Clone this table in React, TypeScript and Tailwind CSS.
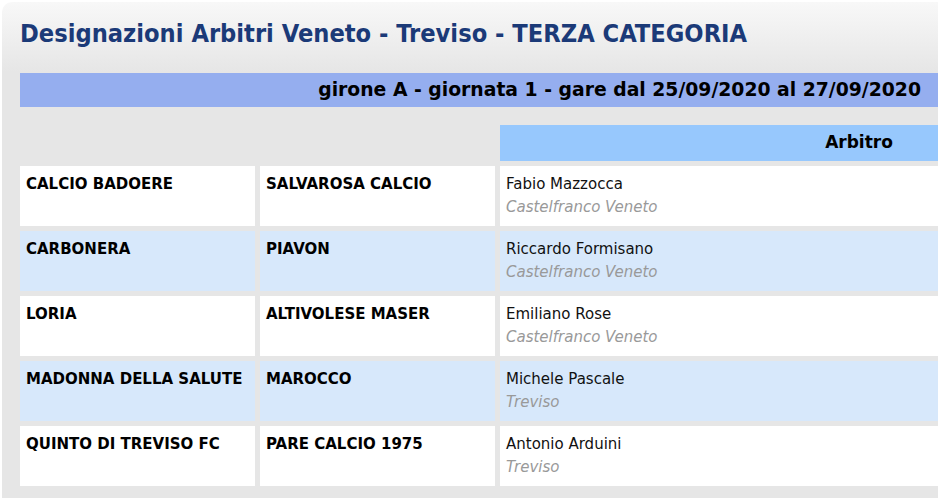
const rows = [
  { home: "CALCIO BADOERE", away: "SALVAROSA CALCIO", ref: "Fabio Mazzocca", city: "Castelfranco Veneto" },
  { home: "CARBONERA", away: "PIAVON", ref: "Riccardo Formisano", city: "Castelfranco Veneto" },
  { home: "LORIA", away: "ALTIVOLESE MASER", ref: "Emiliano Rose", city: "Castelfranco Veneto" },
  { home: "MADONNA DELLA SALUTE", away: "MAROCCO", ref: "Michele Pascale", city: "Treviso" },
  { home: "QUINTO DI TREVISO FC", away: "PARE CALCIO 1975", ref: "Antonio Arduini", city: "Treviso" },
];

export default function App() {
  return (
    <div className="h-[498px] w-full overflow-hidden bg-white pl-[2px] pt-[2px] font-['DejaVu_Sans',Verdana,sans-serif]">
      <div className="h-[600px] w-[1400px] rounded-tl-[10px] bg-[linear-gradient(to_bottom,#f8f8f8_0px,#e6e6e6_70px)] pl-[18px] pt-[16px]">
        <h1 className="h-[55px] font-['DejaVu_Sans_Condensed','DejaVu_Sans',sans-serif] text-[25.2px] font-bold leading-[32px] text-[#1b3a78]">
          Designazioni Arbitri Veneto - Treviso - TERZA CATEGORIA
        </h1>
        <div className="flex h-[34px] w-[918px] items-center justify-end bg-[#95aeef] pr-[17px] text-[18.8px] font-bold text-black">
          girone A - giornata 1 - gare dal 25/09/2020 al 27/09/2020
        </div>
        <div className="mt-[18px] grid grid-cols-[235px_235px_718px] gap-[5px]">
          <div />
          <div />
          <div className="flex h-[36px] items-center justify-center bg-[#97c8fd] text-[17px] font-bold text-black">
            Arbitro
          </div>
          {rows.map((r, i) => {
            const bg = i % 2 === 0 ? "bg-white" : "bg-[#d7e8fb]";
            return [
              <div key={`h${i}`} className={`h-[60px] px-[6px] pt-[7px] text-[15px] font-bold leading-[23px] text-black ${bg}`}>
                {r.home}
              </div>,
              <div key={`a${i}`} className={`h-[60px] px-[6px] pt-[7px] text-[15px] font-bold leading-[23px] text-black ${bg}`}>
                {r.away}
              </div>,
              <div key={`r${i}`} className={`h-[60px] px-[6px] pt-[7px] text-[15px] leading-[23px] ${bg}`}>
                <div className="text-[#111]">{r.ref}</div>
                <div className="italic text-[#999]">{r.city}</div>
              </div>,
            ];
          })}
        </div>
      </div>
    </div>
  );
}
